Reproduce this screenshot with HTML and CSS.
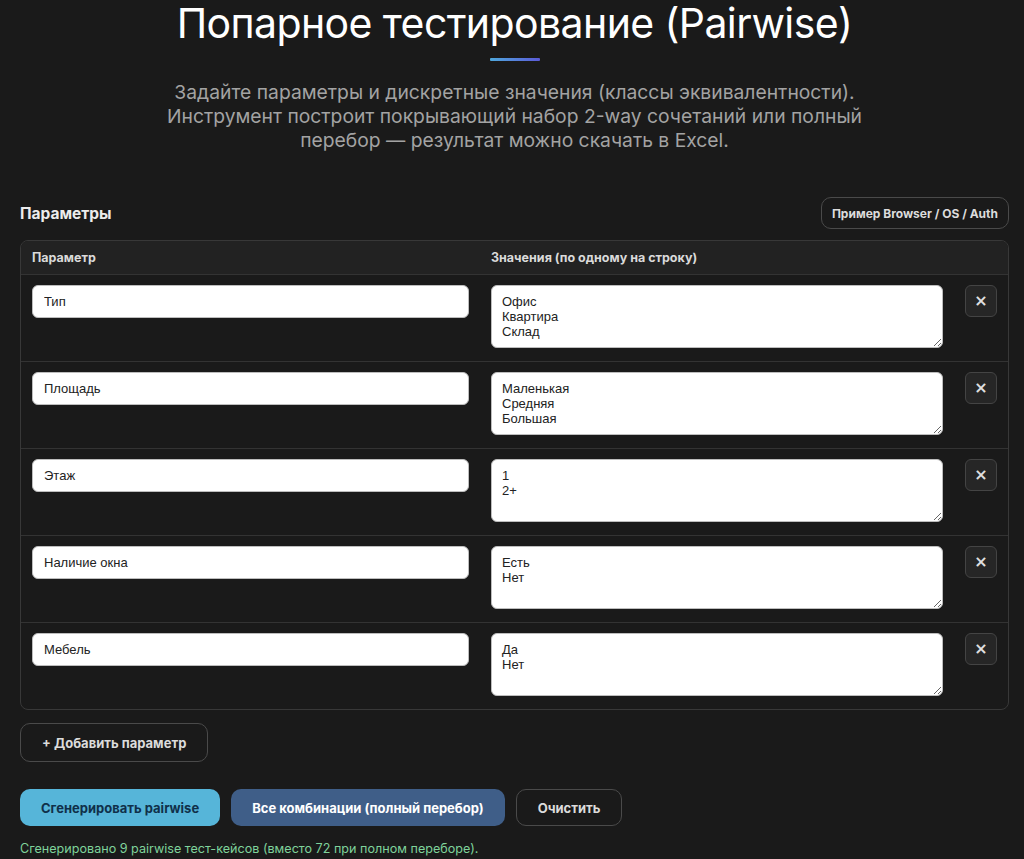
FILE: index.html
```html
<!DOCTYPE html>
<html lang="ru">
<head>
<meta charset="utf-8">
<title>Попарное тестирование (Pairwise)</title>
<link rel="stylesheet" href="styles.css">
</head>
<body>
<div class="page">
  <header class="hero">
    <h1 class="title">Попарное тестирование (Pairwise)</h1>
    <div class="bar"></div>
    <p class="lead">Задайте параметры и дискретные значения (классы эквивалентности). Инструмент построит покрывающий набор 2-way сочетаний или полный перебор — результат можно скачать в Excel.</p>
  </header>

  <section class="params">
    <div class="toolbar">
      <h2 class="heading">Параметры</h2>
      <button class="btn btn-outline btn-small">Пример Browser / OS / Auth</button>
    </div>

    <div class="table">
      <div class="row head">
        <div class="th">Параметр</div>
        <div class="th">Значения (по одному на строку)</div>
        <div></div>
      </div>
      <div class="row">
        <input class="field" value="Тип">
        <textarea class="values">Офис
Квартира
Склад</textarea>
        <button class="remove">×</button>
      </div>
      <div class="row">
        <input class="field" value="Площадь">
        <textarea class="values">Маленькая
Средняя
Большая</textarea>
        <button class="remove">×</button>
      </div>
      <div class="row">
        <input class="field" value="Этаж">
        <textarea class="values">1
2+</textarea>
        <button class="remove">×</button>
      </div>
      <div class="row">
        <input class="field" value="Наличие окна">
        <textarea class="values">Есть
Нет</textarea>
        <button class="remove">×</button>
      </div>
      <div class="row">
        <input class="field" value="Мебель">
        <textarea class="values">Да
Нет</textarea>
        <button class="remove">×</button>
      </div>
    </div>

    <button class="btn btn-outline btn-add">+ Добавить параметр</button>

    <div class="actions">
      <button class="btn btn-primary">Сгенерировать pairwise</button>
      <button class="btn btn-secondary">Все комбинации (полный перебор)</button>
      <button class="btn btn-outline btn-clear">Очистить</button>
    </div>

    <p class="status">Сгенерировано 9 pairwise тест-кейсов (вместо 72 при полном переборе).</p>
  </section>
</div>
</body>
</html>
```

FILE: styles.css
```css
* { box-sizing: border-box; }

html, body {
  margin: 0;
  background: #1a1a1a;
  color: #e6e6e6;
  font-family: Inter, "Noto Sans", sans-serif;
}

body { overflow: hidden; }

.page {
  padding: 0 15px 0 20px;
}

.hero {
  display: flex;
  flex-direction: column;
  align-items: center;
}

.title {
  margin: -1px 0 0;
  font-size: 41px;
  line-height: 49px;
  font-weight: 400;
  color: #ffffff;
  letter-spacing: -0.6px;
}

.bar {
  width: 50px;
  height: 3px;
  margin-top: 10px;
  background: linear-gradient(90deg, #4fa8dc, #5b5bd8);
  border-radius: 1px;
}

.lead {
  margin: 19px 0 0;
  max-width: 720px;
  text-align: center;
  font-size: 19.3px;
  line-height: 24px;
  color: #a3a3a3;
}

.toolbar {
  margin-top: 45px;
  display: flex;
  align-items: center;
  justify-content: space-between;
}

.heading {
  margin: 0;
  font-size: 15.5px;
  font-weight: 700;
  color: #ececec;
}

.btn {
  font-family: Inter, "Noto Sans", sans-serif;
  font-weight: 700;
  font-size: 13px;
  border-radius: 10px;
  cursor: pointer;
}

.btn-outline {
  background: transparent;
  border: 1px solid #4a4a4a;
  color: #dcdcdc;
}

.btn-small {
  height: 32px;
  padding: 0 10px;
  font-size: 12px;
}

.table {
  margin-top: 11px;
  border: 1px solid #383838;
  border-radius: 8px;
  overflow: hidden;
}

.row {
  display: grid;
  grid-template-columns: 437px 452px 32px;
  column-gap: 22px;
  align-items: start;
  padding: 10px 12px 13px 11px;
  border-top: 1px solid #333333;
}

.row.head {
  border-top: 0;
  background: #222222;
  padding: 0 12px 0 11px;
  height: 33px;
  align-items: center;
}

.th {
  font-size: 12.5px;
  font-weight: 700;
  color: #dadada;
}

.field, .values {
  font-family: "Liberation Sans", Arial, sans-serif;
  font-size: 13px;
  color: #222;
  background: #ffffff;
  border: 1px solid #bdbdbd;
  border-radius: 6px;
  margin: 0;
}

.field {
  width: 100%;
  height: 33px;
  padding: 0 11px;
}

.values {
  height: 63px;
  padding: 8px 10px;
  line-height: 15px;
  resize: vertical;
  display: block;
  width: 100%;
}

.remove {
  width: 32px;
  height: 32px;
  padding: 0;
  background: #262626;
  border: 1px solid #444;
  border-radius: 6px;
  color: #e0e0e0;
  font-family: "DejaVu Sans", sans-serif;
  font-size: 16px;
  font-weight: 700;
  line-height: 30px;
  cursor: pointer;
}

.btn-add {
  display: block;
  margin-top: 13px;
  height: 39px;
  padding: 0 21px;
}

.actions {
  margin-top: 27px;
  display: flex;
  gap: 11px;
}

.actions .btn {
  height: 37px;
  padding: 0 21px;
  border: 0;
}

.btn-primary {
  background: #56b5d9;
  color: #10304a;
}

.btn-secondary {
  background: #3f5e88;
  color: #ffffff;
}

.actions .btn-clear {
  border: 1px solid #4a4a4a;
}

.status {
  margin: 14px 0 0;
  font-size: 12.6px;
  line-height: 17px;
  color: #7fd39b;
}
```
